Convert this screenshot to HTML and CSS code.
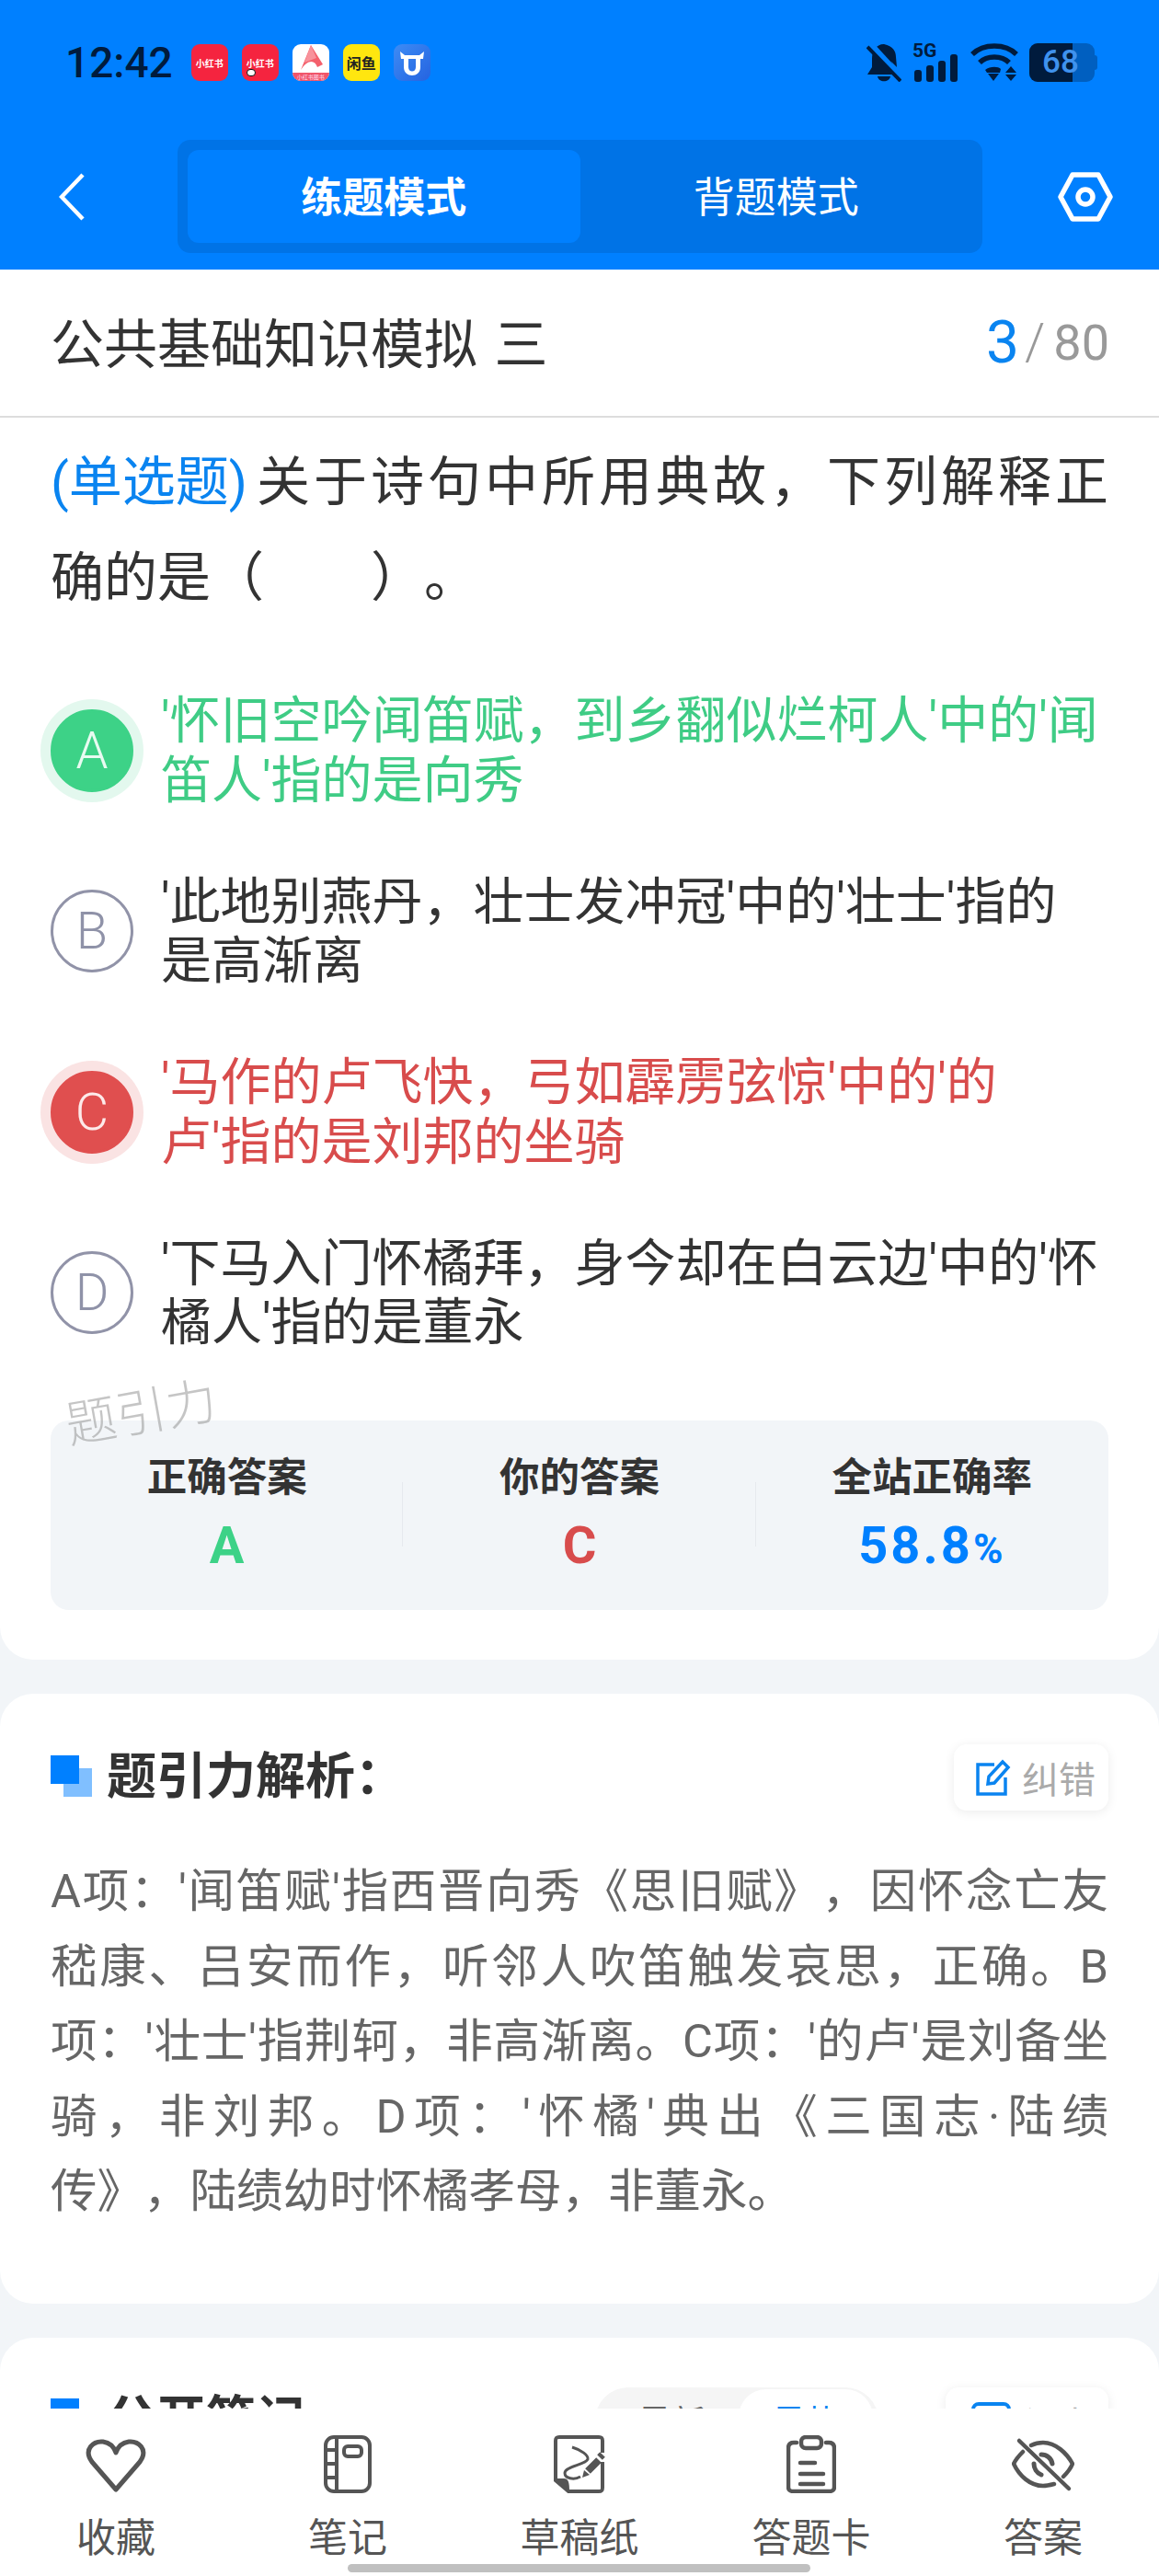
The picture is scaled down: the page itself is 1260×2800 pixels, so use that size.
FILE: index.html
```html
<!DOCTYPE html>
<html lang="zh-CN">

<head>
    <meta charset="UTF-8">
    <title>练题模式</title>
    <link rel="stylesheet" href="styles.css">
</head>

<body>
    <div class="page">
        <header class="top">
            <div class="status">
                <span class="time">12:42</span>
                <div class="apps">
                    <div class="app app-red"><span>小红书</span></div>
                    <div class="app app-red"><span>小红书</span><i class="dot"></i></div>
                    <div class="app app-white">
                        <svg width="40" height="31" viewBox="0 0 40 31"><path d="M20 1 L9 28 C16 17 24 16 27 25 L33 22 Z" fill="#f4606c"/><path d="M20 1 L26 15 L13 20 Z" fill="#f8929b"/></svg>
                        <span class="band">小红书图书</span>
                    </div>
                    <div class="app app-yellow"><span>闲鱼</span></div>
                    <div class="app app-blue">
                        <svg width="40" height="40" viewBox="0 0 40 40"><path d="M7 8 L12 12 H28 L33 8 L32 16 H29 V25 C29 37 11 37 11 25 V16 H8 Z M16 16 V25 C16 31 24 31 24 25 V16 Z" fill="#fff" fill-rule="evenodd"/></svg>
                    </div>
                </div>
                <div class="sys">
                    <svg width="38" height="42" viewBox="0 0 38 42"><path d="M19 1 C10 1 6 9 6 17 V26 L1 34 H33 Z" fill="#001b3d"/><path d="M12 36 H26 C25 43 13 43 12 36 Z" fill="#001b3d"/><path d="M33 26 L32 15 C32 9 29 3 19 1 L12 5 Z" fill="#001b3d"/><path d="M4 1 L38 38" stroke="#0080ff" stroke-width="7"/><path d="M1 4 L37 41" stroke="#001b3d" stroke-width="4"/></svg>
                    <div class="signal">
                        <span class="five-g">5G</span>
                        <svg width="50" height="30" viewBox="0 0 50 30"><rect x="2" y="17" width="8" height="13" rx="3" fill="#001b3d"/><rect x="15" y="12" width="8" height="18" rx="3" fill="#001b3d"/><rect x="28" y="7" width="8" height="23" rx="3" fill="#001b3d"/><rect x="41" y="0" width="8" height="30" rx="3" fill="#001b3d"/></svg>
                    </div>
                    <svg width="52" height="42" viewBox="0 0 52 42"><g fill="none" stroke="#001b3d" stroke-width="5.5"><path d="M2 12 C14 0 38 0 50 12"/><path d="M10 21 C18 13 34 13 42 21"/></g><path d="M16 29 C21 25 30 25 33 28 L32 32 H18 Z" fill="#001b3d"/><path d="M19 33 H31 L25 41 Z" fill="#001b3d"/><path d="M44 25 L50 32 H38 Z M38 34 H50 L44 41 Z" fill="#001b3d"/></svg>
                    <div class="battery">
                        <div class="level"></div>
                        <span class="pct">68</span>
                    </div>
                </div>
            </div>
            <nav class="nav">
                <svg class="back" width="28" height="52" viewBox="0 0 28 52"><path d="M26 2 L3 26 L26 50" fill="none" stroke="#fff" stroke-width="4.5"/></svg>
                <div class="seg">
                    <div class="seg-item active">练题模式</div>
                    <div class="seg-item">背题模式</div>
                </div>
                <svg class="gear" width="60" height="54" viewBox="0 0 60 54"><path d="M3 27 L16 3 H44 L57 27 L44 51 H16 Z" fill="none" stroke="#fff" stroke-width="5.5" stroke-linejoin="round"/><circle cx="30" cy="27" r="8" fill="none" stroke="#fff" stroke-width="5.5"/></svg>
            </nav>
        </header>

        <div class="title-bar">
            <span class="paper">公共基础知识模拟 三</span>
            <span class="count"><b>3</b><i>/</i>80</span>
        </div>

        <section class="card question">
            <p class="stem">
                <span class="line"><em>(单选题)</em>关于诗句中所用典故，下列解释正</span>
                <span class="line last">确的是（　　）。</span>
            </p>

            <div class="option right">
                <div class="circle">A</div>
                <div class="opt-text">'怀旧空吟闻笛赋，到乡翻似烂柯人'中的'闻<br>笛人'指的是向秀</div>
            </div>
            <div class="option">
                <div class="circle">B</div>
                <div class="opt-text">'此地别燕丹，壮士发冲冠'中的'壮士'指的<br>是高渐离</div>
            </div>
            <div class="option wrong">
                <div class="circle">C</div>
                <div class="opt-text">'马作的卢飞快，弓如霹雳弦惊'中的'的<br>卢'指的是刘邦的坐骑</div>
            </div>
            <div class="option">
                <div class="circle">D</div>
                <div class="opt-text">'下马入门怀橘拜，身今却在白云边'中的'怀<br>橘人'指的是董永</div>
            </div>

            <div class="watermark">题引力</div>

            <div class="stats">
                <div class="stat">
                    <div class="stat-label">正确答案</div>
                    <div class="stat-value green">A</div>
                </div>
                <div class="stat">
                    <div class="stat-label">你的答案</div>
                    <div class="stat-value red">C</div>
                </div>
                <div class="stat">
                    <div class="stat-label">全站正确率</div>
                    <div class="stat-value blue">58.8<small>%</small></div>
                </div>
            </div>
        </section>

        <section class="card analysis">
            <div class="card-head">
                <div class="head-title"><i class="mark"></i>题引力解析：</div>
                <div class="soft-btn">
                    <svg width="38" height="40" viewBox="0 0 38 40"><path d="M20 6 H2 V38 H32 V20" fill="none" stroke="#0a84f0" stroke-width="3.5"/><path d="M13 27 L14 19 L29 3 L35 9 L20 26 Z" fill="none" stroke="#0a84f0" stroke-width="3.5"/></svg>
                    纠错
                </div>
            </div>
            <p class="analysis-text">
                <span>A项：'闻笛赋'指西晋向秀《思旧赋》，因怀念亡友</span>
                <span>嵇康、吕安而作，听邻人吹笛触发哀思，正确。B</span>
                <span>项：'壮士'指荆轲，非高渐离。C项：'的卢'是刘备坐</span>
                <span>骑，非刘邦。D项：'怀橘'典出《三国志·陆绩</span>
                <span>传》，陆绩幼时怀橘孝母，非董永。</span>
            </p>
        </section>

        <section class="card notes">
            <div class="card-head">
                <div class="head-title"><i class="mark"></i>公开笔记</div>
                <div class="note-tools">
                    <div class="sort">
                        <span>最新</span>
                        <span class="on">最热</span>
                    </div>
                    <div class="soft-btn wide">
                        <svg width="43" height="40" viewBox="0 0 43 40"><rect x="2" y="2" width="39" height="36" rx="6" fill="none" stroke="#0a84f0" stroke-width="4"/></svg>
                        记上
                    </div>
                </div>
            </div>
        </section>

        <footer class="tabs">
            <div class="tab">
                <svg width="66" height="63" viewBox="0 0 66 63"><path d="M33 59 L7 29 C-3 15 9 6 19 7 C26 8 31 13 33 19 C35 13 40 8 47 7 C57 6 69 15 59 29 Z" fill="none" stroke="#555" stroke-width="5" stroke-linejoin="round"/></svg>
                <span>收藏</span>
            </div>
            <div class="tab">
                <svg width="52" height="63" viewBox="0 0 52 63" fill="none" stroke="#555" stroke-width="4"><rect x="2" y="2" width="48" height="59" rx="9"/><path d="M14 2 V61 M2 16 H14 M2 31 H14 M2 46 H14"/><rect x="22" y="12" width="19" height="11" rx="4"/></svg>
                <span>笔记</span>
            </div>
            <div class="tab">
                <svg width="56" height="63" viewBox="0 0 56 63" fill="none" stroke="#555" stroke-width="4"><path d="M53 19 V6 C53 3 52 2 49 2 H6 C3 2 2 3 2 6 V49 L16 61 H49 C52 61 53 60 53 57 V29"/><path d="M3 48 H11 C15 48 16 51 16 61 Z" fill="#555" stroke-width="2"/><path d="M20 13 C30 16 38 22 37 26 C35 32 12 34 12 41 C12 47 22 49 29 45" stroke-width="3"/><path d="M37 39 L49 27" stroke-width="8"/><path d="M50 24 L53 21" stroke-width="8"/><path d="M31 46 L33 38 L39 43 Z" fill="#555" stroke="none"/></svg>
                <span>草稿纸</span>
            </div>
            <div class="tab">
                <svg width="54" height="63" viewBox="0 0 54 63" fill="none" stroke="#555" stroke-width="4.5" stroke-linecap="round"><path d="M11 8 H8 C4 8 2 10 2 14 V56 C2 60 4 61 8 61 H46 C50 61 52 60 52 56 V14 C52 10 50 8 46 8 H43"/><rect x="16" y="2" width="22" height="12" rx="5"/><path d="M15 30 H31 M15 42 H40 M15 53 H40"/></svg>
                <span>答题卡</span>
            </div>
            <div class="tab">
                <svg width="68" height="63" viewBox="0 0 68 63" fill="none" stroke="#555" stroke-width="4.5" stroke-linecap="round"><path d="M12 18 C8 22 4 27 2 31 C8 44 20 55 34 55 C38 55 42 54 46 53"/><path d="M21 11 C25 9 30 8 34 8 C48 8 60 20 66 31 C64 36 60 41 56 45"/><path d="M24 31 C24 36 27 41 32 43" stroke-width="5"/><path d="M32 21 C38 21 43 25 44 31" stroke-width="5"/><path d="M8 6 L62 58"/></svg>
                <span>答案</span>
            </div>
            <div class="home-bar"></div>
        </footer>
    </div>
</body>

</html>
```
FILE: styles.css
```css
body {
    margin: 0;
    padding: 0;
    font-family: Roboto, "Noto Sans CJK SC", sans-serif;
    text-spacing-trim: space-all;
    color: #333;
}

.page {
    position: relative;
    width: 1260px;
    height: 2800px;
    overflow: hidden;
    background-color: #f2f5f8;
}

/* blue header */
.top {
    height: 293px;
    background-color: #0080ff;
}

.status {
    display: flex;
    align-items: center;
    height: 42px;
    padding: 47px 70px 0 71px;
    margin-bottom: 63px;
}

.time {
    font-size: 46px;
    font-weight: 500;
    color: #001b3d;
}

.apps {
    display: flex;
    gap: 15px;
    margin-left: 20px;
}

.app {
    position: relative;
    display: flex;
    flex-direction: column;
    align-items: center;
    justify-content: center;
    width: 40px;
    height: 40px;
    overflow: hidden;
    border-radius: 9px;
    font-size: 10px;
    font-weight: 700;
}

.app-red {
    background-color: #f5243f;
    color: #fff;
}

.app-red .dot {
    position: absolute;
    left: 5px;
    bottom: 5px;
    width: 8px;
    height: 6px;
    border: 1px solid #111;
    border-radius: 4px;
    background-color: #fff;
}

.app-white {
    justify-content: flex-start;
    background-color: #fff;
}

.app-white .band {
    width: 100%;
    height: 9px;
    line-height: 9px;
    background-color: #f0566a;
    color: #fde;
    font-size: 6px;
    font-weight: 400;
    text-align: center;
}

.app-yellow {
    background-color: #ffe60f;
    color: #222;
    font-size: 16px;
}

.app-blue {
    background: linear-gradient(135deg, #3d8cf5, #2563e0);
}

.sys {
    display: flex;
    align-items: center;
    margin-left: auto;
}

.signal {
    position: relative;
    width: 50px;
    height: 42px;
    margin-left: 12px;
    display: flex;
    align-items: flex-end;
}

.five-g {
    position: absolute;
    left: 0;
    top: -3px;
    font-size: 21px;
    line-height: 22px;
    font-weight: 700;
    color: #001b3d;
}

.sys > svg:nth-child(3) {
    margin-left: 13px;
}

.battery {
    position: relative;
    width: 71px;
    height: 42px;
    margin-left: 12px;
    border-radius: 9px;
    background-color: #005fc0;
}

.battery::after {
    content: "";
    position: absolute;
    right: -3px;
    top: 13px;
    width: 3px;
    height: 16px;
    border-radius: 0 3px 3px 0;
    background-color: #005fc0;
}

.level {
    width: 47px;
    height: 100%;
    border-radius: 9px 0 0 9px;
    background-color: #001b3d;
}

.pct {
    position: absolute;
    left: 14px;
    top: 0;
    font-size: 35px;
    line-height: 42px;
    font-weight: 500;
    color: #3f92ee;
}

.nav {
    display: flex;
    align-items: center;
    height: 123px;
    padding-left: 64px;
}

.seg {
    display: flex;
    width: 853px;
    height: 101px;
    margin-left: 101px;
    padding: 11px;
    border-radius: 14px;
    background-color: #0073e6;
}

.seg-item {
    flex: 1;
    height: 101px;
    border-radius: 12px;
    font-size: 45px;
    line-height: 106px;
    text-align: center;
    color: #fff;
}

.seg-item.active {
    background-color: #0080ff;
    font-weight: 700;
}

.gear {
    margin-left: 82px;
}

/* paper title */
.title-bar {
    display: flex;
    align-items: center;
    justify-content: space-between;
    height: 153px;
    padding: 0 54px 6px 55px;
    background-color: #fff;
    border-bottom: 2px solid #ddd;
}

.paper {
    font-size: 58px;
    word-spacing: 4px;
}

.count {
    margin-top: 5px;
    font-size: 54px;
    color: #999;
}

.count b {
    font-size: 64px;
    font-weight: 400;
    vertical-align: -3px;
    color: #0a84f0;
}

.count i {
    margin: 0 9px 0 6px;
    font-style: normal;
    font-size: 56px;
    font-weight: 300;
}

/* cards */
.card {
    position: relative;
    margin-bottom: 37px;
    background-color: #fff;
    border-radius: 36px;
}

.question {
    box-sizing: border-box;
    height: 1350px;
    padding: 18px 55px 0;
    border-radius: 0 0 36px 36px;
}

.stem {
    margin: 0 0 71px;
    font-size: 58px;
    line-height: 104px;
}

.line {
    display: block;
    text-align: justify;
    text-align-last: justify;
}

.line.last {
    text-align-last: left;
}

.stem em {
    display: inline-block;
    margin-right: 6px;
    font-style: normal;
    color: #0a84f0;
}

.option {
    display: flex;
    align-items: center;
    gap: 30px;
    margin-bottom: 67.5px;
    height: 129px;
}

.circle {
    flex: none;
    width: 84px;
    height: 84px;
    border: 3px solid #9193a8;
    border-radius: 50%;
    background-color: #fff;
    font-size: 56px;
    font-weight: 300;
    line-height: 84px;
    text-align: center;
    color: #8f92a8;
}

.opt-text {
    font-size: 55px;
    line-height: 64.5px;
    white-space: nowrap;
}

.right .circle {
    border-color: #3dd287;
    background-color: #3dd287;
    box-shadow: 0 0 0 11px #e3f8ee;
    color: #e8fbf1;
}

.right .opt-text {
    color: #3fcc85;
}

.wrong .circle {
    border-color: #e04f4f;
    background-color: #e04f4f;
    box-shadow: 0 0 0 11px #fae3e3;
    color: #fdeaea;
}

.wrong .opt-text {
    color: #d84c4c;
}

.watermark {
    position: absolute;
    left: 71px;
    top: 1046px;
    z-index: 2;
    font-size: 55px;
    font-weight: 300;
    line-height: 72px;
    color: rgba(150, 150, 150, 0.55);
    transform: rotate(-10deg);
}

.stats {
    display: flex;
    height: 206px;
    margin-top: 74px;
    border-radius: 20px;
    background-color: #f2f5f8;
}

.stat {
    position: relative;
    flex: 1;
    padding-top: 35px;
    text-align: center;
}

.stat + .stat::before {
    content: "";
    position: absolute;
    left: -1px;
    top: 67px;
    height: 70px;
    border-left: 1px solid #e6e9ee;
}

.stat-label {
    font-size: 43.5px;
    font-weight: 700;
    line-height: 56px;
}

.stat-value {
    margin-top: 12px;
    font-size: 56px;
    font-weight: 700;
    line-height: 66px;
}

.stat-value small {
    font-size: 44px;
}

.green {
    color: #3dd287;
}

.red {
    color: #d84c4c;
}

.blue {
    color: #0080ff;
    letter-spacing: 3px;
}

/* analysis + notes */
.analysis {
    height: 663px;
    padding: 55px 55px 0;
    box-sizing: border-box;
}

.card-head {
    display: flex;
    align-items: center;
    justify-content: space-between;
    height: 72px;
}

.head-title {
    position: relative;
    padding: 0 0 12px 61px;
    font-size: 54px;
    font-weight: 700;
}

.mark {
    position: absolute;
    left: 0;
    top: 21px;
    width: 31px;
    height: 31px;
    background-color: #0080ff;
    box-shadow: 14px 14px 0 #80bfff;
}

.soft-btn {
    display: flex;
    align-items: center;
    gap: 12px;
    height: 72px;
    padding: 0 14px 0 24px;
    border-radius: 14px;
    background-color: #fff;
    box-shadow: 0 2px 12px rgba(0, 0, 0, 0.08);
    font-size: 40px;
    color: #aaa;
}

.soft-btn.wide {
    gap: 14px;
    padding: 0 16px 0 28px;
    font-size: 38px;
}

.analysis-text {
    margin: 47px 0 0;
    font-size: 50.5px;
    line-height: 81.5px;
    color: #666;
}

.analysis-text span {
    display: block;
    text-align: justify;
    text-align-last: justify;
    white-space: nowrap;
}

.analysis-text span:last-child {
    text-align-last: left;
}

.notes {
    padding: 54px 55px 0;
}

.note-tools {
    display: flex;
    align-items: center;
    gap: 73px;
}

.sort {
    box-sizing: border-box;
    display: flex;
    align-items: center;
    justify-content: space-between;
    width: 308px;
    height: 72px;
    padding: 0 6px 0 46px;
    border-radius: 36px;
    background-color: #f5f5f5;
    font-size: 37px;
    color: #666;
}

.sort .on {
    padding: 7px 36px;
    border-radius: 30px;
    background-color: #fff;
    color: #0a84f0;
}

/* bottom tabs */
.tabs {
    position: absolute;
    left: 0;
    right: 0;
    bottom: 0;
    display: flex;
    height: 182px;
    background-color: #fff;
}

.tab {
    flex: 1;
    display: flex;
    flex-direction: column;
    align-items: center;
    padding-top: 29px;
    font-size: 43px;
    line-height: 56px;
    color: #555;
}

.tab svg {
    margin-bottom: 21px;
}

.home-bar {
    position: absolute;
    left: 378px;
    bottom: 4px;
    width: 503px;
    height: 9px;
    border-radius: 5px;
    background-color: #c0c0c0;
}
```
